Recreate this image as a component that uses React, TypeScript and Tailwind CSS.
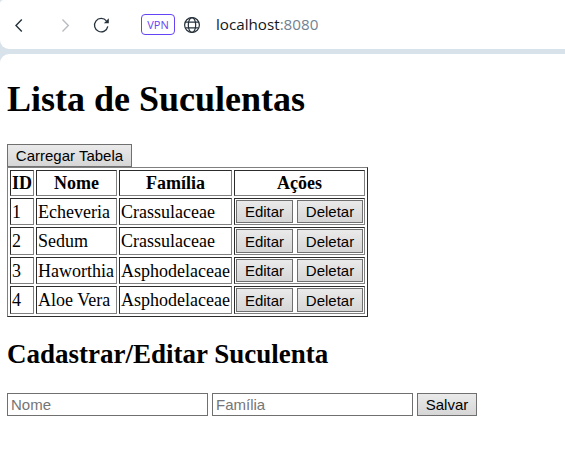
import React from "react";

const rows = [
  { id: 1, nome: "Echeveria", familia: "Crassulaceae", height: "h-[27px]", button: "h-[23px]" },
  { id: 2, nome: "Sedum", familia: "Crassulaceae", height: "h-[28px]", button: "h-[24px]" },
  { id: 3, nome: "Haworthia", familia: "Asphodelaceae", height: "h-[27px]", button: "h-[23px]" },
  { id: 4, nome: "Aloe Vera", familia: "Asphodelaceae", height: "h-[28px]", button: "h-[24px]" },
];

const cell =
  "border border-t-[#2c2c2c] border-l-[#2c2c2c] border-r-[#808080] border-b-[#808080] p-px align-middle whitespace-nowrap";

function Button({ children, className }: { children: React.ReactNode; className: string }) {
  return (
    <button
      className={`block shrink-0 border border-[#707070] bg-linear-to-b from-[#eaeaea] to-[#d6d6d6] p-0 text-center font-['Liberation_Sans',Arial,sans-serif] text-[15px] leading-[21px] whitespace-nowrap text-black ${className}`}
    >
      {children}
    </button>
  );
}

function Toolbar() {
  return (
    <header className="flex h-[49px] items-center rounded-bl-[9px] rounded-tl-[4px] bg-white">
      <svg className="ml-[12px] h-[16px] w-[12px]" viewBox="0 0 12 16" fill="none" stroke="#26323c" strokeWidth="1.4">
        <path d="M9.8 2.6 4 8.6l5.8 6" />
      </svg>
      <svg className="ml-[36px] h-[16px] w-[12px]" viewBox="0 0 12 16" fill="none" stroke="#b9bdc1" strokeWidth="1.4">
        <path d="m2.5 2.6 5.8 6-5.8 6" />
      </svg>
      <svg className="ml-[20px] h-[18px] w-[18px]" viewBox="0 0 18 18" fill="none" stroke="#26323c" strokeWidth="1.3">
        <path d="M14.4 4.9A6.7 6.7 0 1 0 15.8 10.4" />
        <path d="M16.8 2.3v4.9h-4.9z" fill="#26323c" stroke="none" />
      </svg>
      <div className="ml-[31px] flex h-[21px] w-[34px] items-center justify-center rounded-[4px] border border-[#6544f5] pt-px font-['Open_Sans',sans-serif] text-[11px] font-medium text-[#6544f5]">
        VPN
      </div>
      <svg className="ml-[8px] h-[18px] w-[18px]" viewBox="0 0 18 18" fill="none" stroke="#26323c" strokeWidth="1.2">
        <circle cx="9" cy="9" r="7.4" />
        <ellipse cx="9" cy="9" rx="3.7" ry="7.4" />
        <path d="M2.3 6.2h13.4M2.3 11.8h13.4" />
      </svg>
      <span className="-mt-px ml-[15px] font-['Open_Sans',sans-serif] text-[15.2px] leading-[22px] font-[370] text-[#111820]">
        localhost<span className="text-[#718291]">:8080</span>
      </span>
    </header>
  );
}

export default function App() {
  return (
    <div className="flex h-[465px] w-[565px] flex-col gap-[5px] overflow-hidden bg-[#d8e2ea] font-['Liberation_Serif','Times_New_Roman',serif] text-[18px] leading-[20px] text-black">
      <Toolbar />
      <main className="flex-1 rounded-tl-[9px] bg-white pl-[7px]">
        <h1 className="pt-[25px] text-[36px] leading-[40px] font-bold">Lista de Suculentas</h1>
        <Button className="mt-[25px] h-[23px] w-[125px]">Carregar Tabela</Button>
        <table className="h-[150px] w-[361px] table-fixed border-separate border-spacing-[2px] border border-t-[#808080] border-l-[#808080] border-r-[#2c2c2c] border-b-[#2c2c2c]">
          <colgroup>
            <col className="w-[24px]" />
            <col className="w-[81px]" />
            <col className="w-[113px]" />
            <col className="w-[131px]" />
          </colgroup>
          <thead>
            <tr className="h-[26px]">
              <th className={cell}>ID</th>
              <th className={cell}>Nome</th>
              <th className={cell}>Família</th>
              <th className={cell}>Ações</th>
            </tr>
          </thead>
          <tbody>
            {rows.map((r) => (
              <tr key={r.id} className={r.height}>
                <td className={cell}>{r.id}</td>
                <td className={cell}>{r.nome}</td>
                <td className={cell}>{r.familia}</td>
                <td className={cell}>
                  <div className="flex gap-[4px]">
                    <Button className={`w-[57px] ${r.button}`}>Editar</Button>
                    <Button className={`w-[66px] ${r.button}`}>Deletar</Button>
                  </div>
                </td>
              </tr>
            ))}
          </tbody>
        </table>
        <h2 className="mt-[22px] text-[27px] leading-[30px] font-bold">Cadastrar/Editar Suculenta</h2>
        <form className="mt-[24px] flex gap-[4px]" onSubmit={(e) => e.preventDefault()}>
          {["Nome", "Família"].map((label) => (
            <input
              key={label}
              placeholder={label}
              className="h-[23px] w-[201px] border border-[#707070] bg-white px-[3px] font-['Liberation_Sans',Arial,sans-serif] text-[15px] leading-[21px] placeholder:text-[#757575]"
            />
          ))}
          <Button className="h-[23px] w-[60px]">Salvar</Button>
        </form>
      </main>
    </div>
  );
}
